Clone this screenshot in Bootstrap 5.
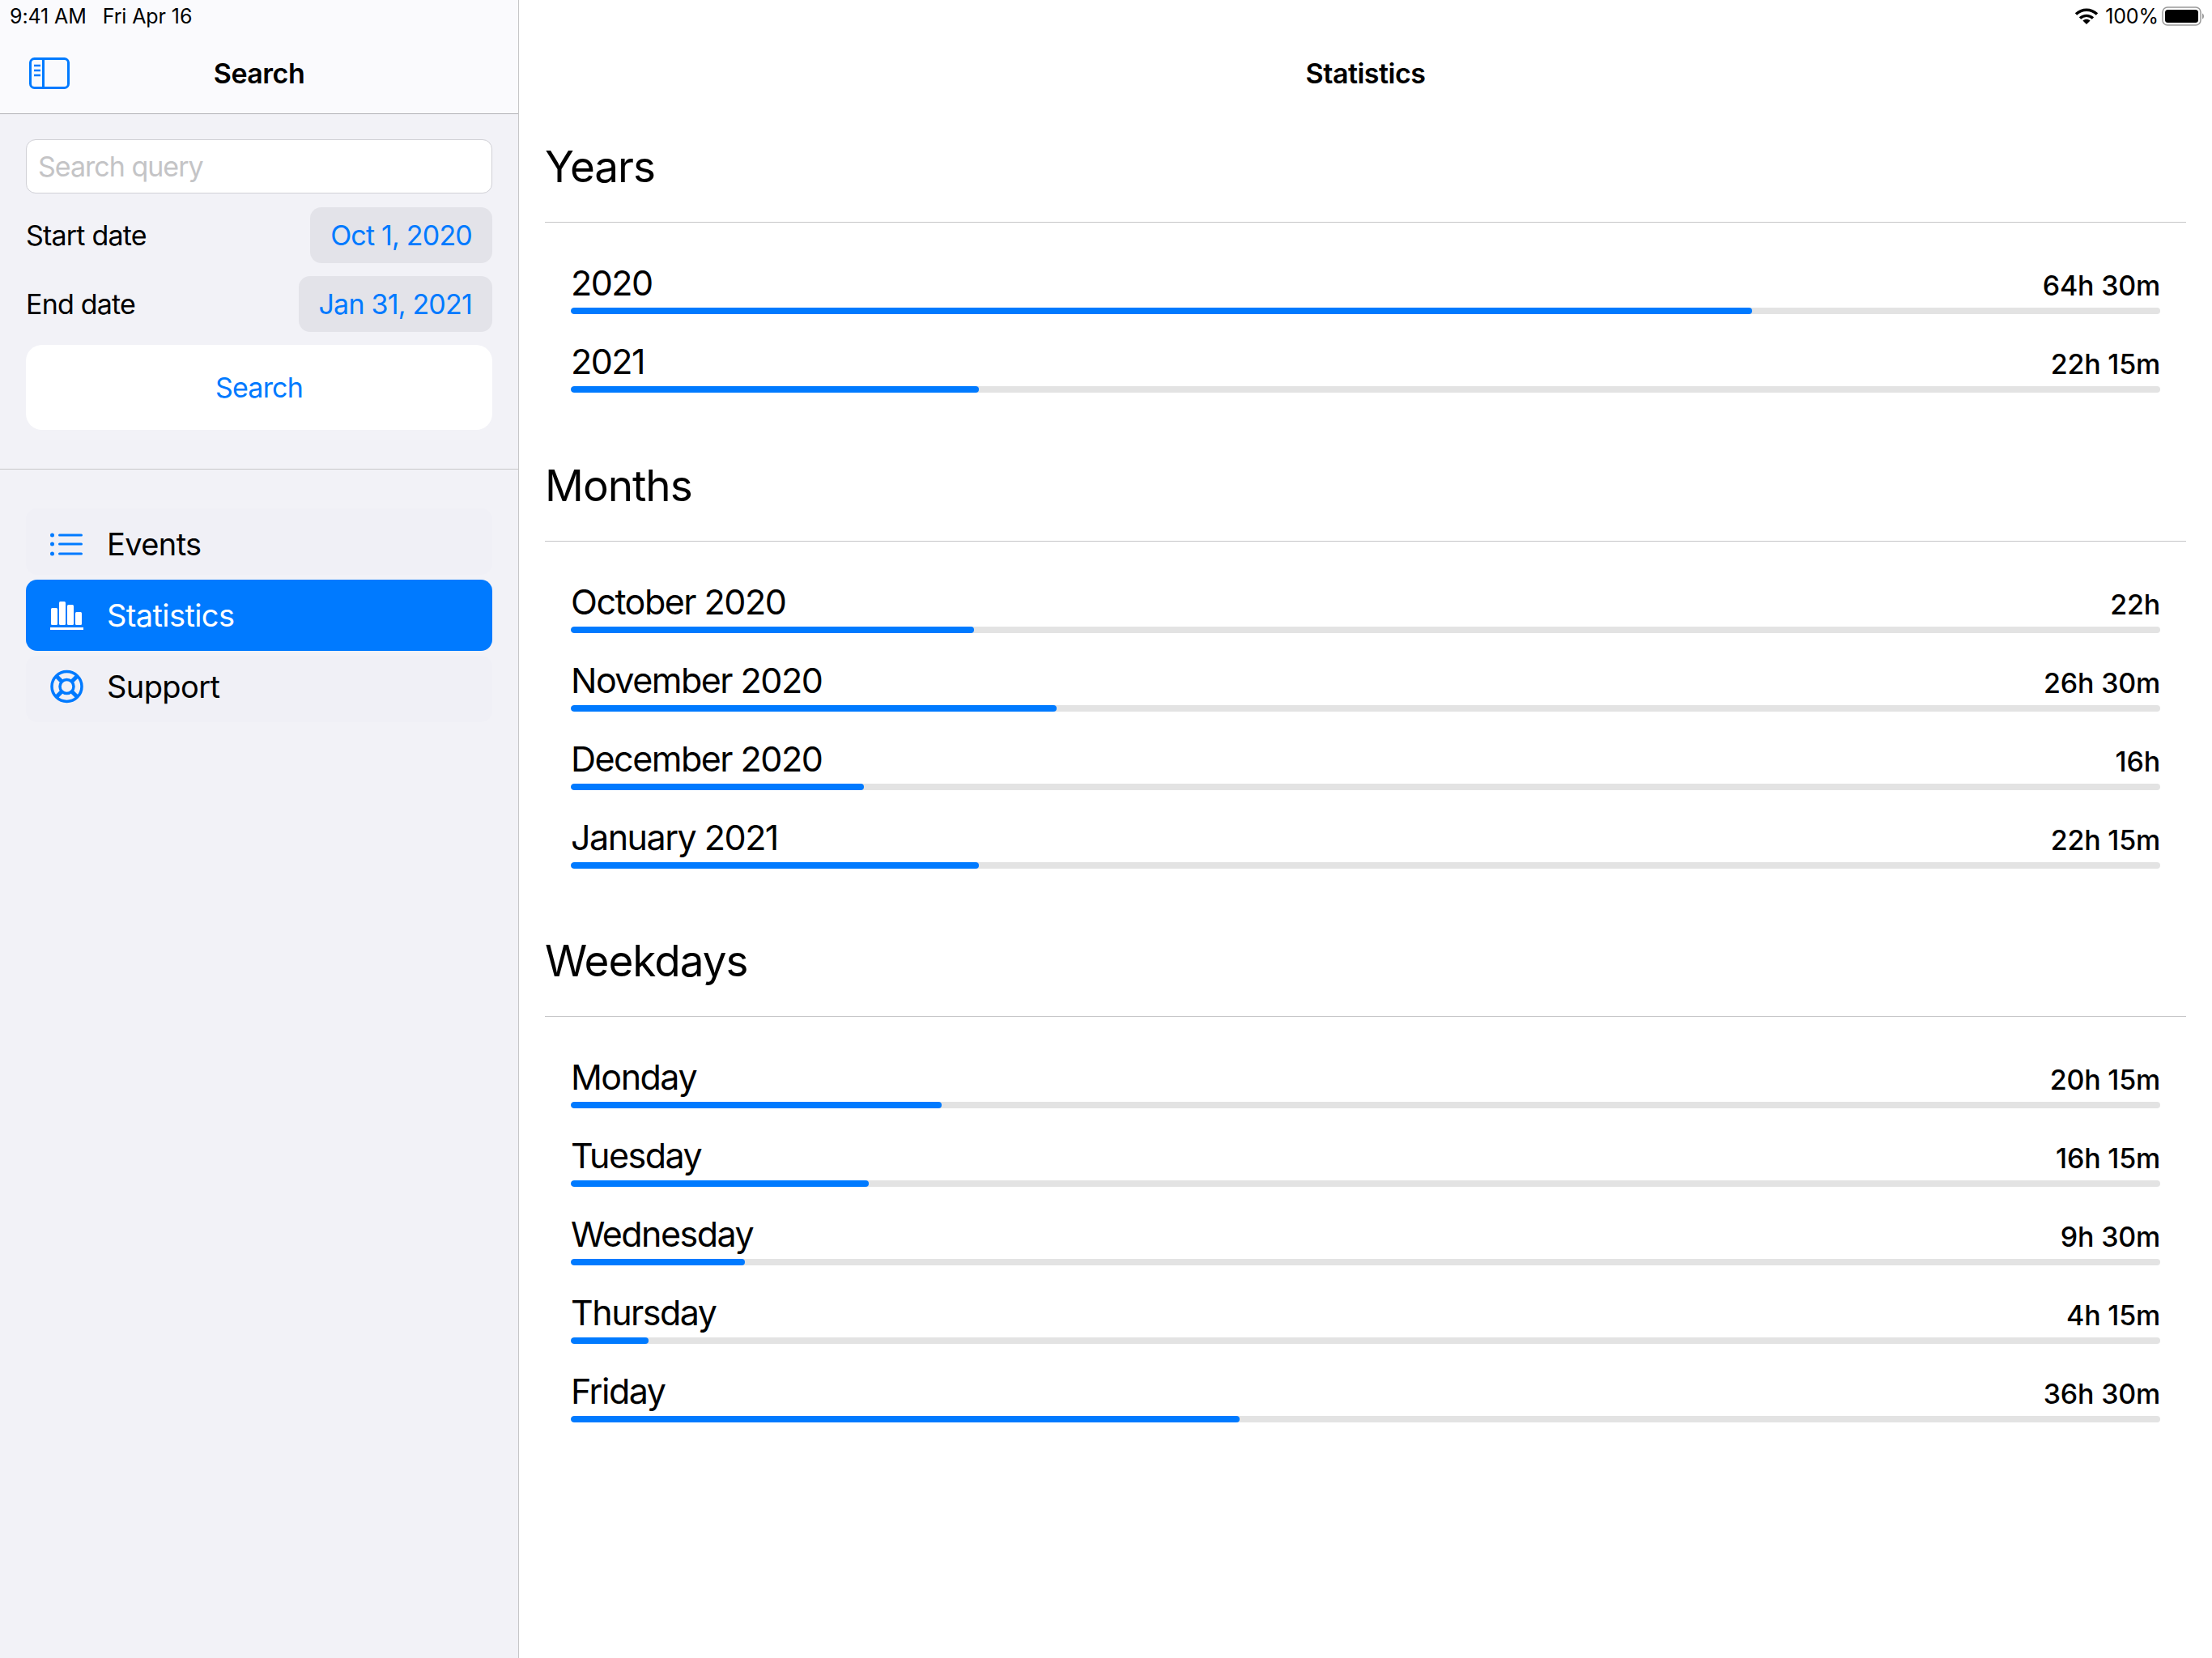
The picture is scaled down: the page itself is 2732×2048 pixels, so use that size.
<!DOCTYPE html>
<html lang="en">
<head>
  <meta charset="UTF-8" />
  <meta name="viewport" content="width=device-width, initial-scale=1.0"/>
  <link href="https://cdn.jsdelivr.net/npm/bootstrap@5.3.5/dist/css/bootstrap.min.css" rel="stylesheet" />
  <script src="https://cdn.jsdelivr.net/npm/bootstrap@5.3.5/dist/js/bootstrap.bundle.min.js" defer></script>
  <title>Statistics</title>
  <style>
    body {
      font-family: Inter, "Liberation Sans", sans-serif;
      color: #000;
      background: #fff;
      height: 2048px;
      overflow: hidden;
    }

    .side-pane {
      width: 641px;
      flex: none;
      height: 2048px;
      background: #f2f2f7;
      border-right: 1px solid #c6c6c8;
    }

    .side-head {
      height: 141px;
      background: #fafafd;
      border-bottom: 1px solid #b2b2b6;
    }

    .status-line {
      height: 40px;
      font-size: 25px;
      letter-spacing: -0.1px;
      line-height: 40px;
    }

    .side-head .status-line { padding-left: 12px; gap: 20px; }
    .main-pane .status-line { padding-right: 10px; }

    .battery-icon { margin-left: -4px; }

    .title-line {
      height: 100px;
      padding-top: 1px;
      font-size: 34px;
      font-weight: 600;
      letter-spacing: -0.5px;
    }

    .side-head .title-line { height: 100px; position: relative; }

    .toggle-icon {
      position: absolute;
      left: 35px;
      top: 30px;
    }

    .search-form {
      padding: 31px 32px 0;
      border-bottom: 1px solid #c6c6c8;
      height: 439px;
    }

    .search-form .form-control {
      height: 67px;
      font-size: 34px;
      letter-spacing: -1px;
      padding: 0 14px;
      border-color: #d1d1d6;
      border-radius: 12px;
      color: #000;
    }

    .search-form .form-control::placeholder { color: #c4c4c6; opacity: 1; }

    .date-line {
      font-size: 34px;
      letter-spacing: -0.8px;
      height: 69px;
      margin-top: 16px;
    }

    .search-form .form-control + .date-line { margin-top: 17px; }

    .date-pill {
      background: #e3e3e9;
      color: #007aff;
      border-radius: 14px;
      height: 69px;
      line-height: 69px;
      padding: 0 25px;
    }

    .search-form .btn {
      display: block;
      width: 100%;
      height: 105px;
      margin-top: 16px;
      background: #fff;
      color: #007aff;
      border: 0;
      border-radius: 20px;
      font-size: 34px;
      letter-spacing: -0.8px;
    }

    .side-nav { padding: 48px 32px 0; }

    .side-nav .list-group-item {
      height: 82px;
      display: flex;
      align-items: center;
      gap: 28px;
      padding: 0 29px;
      font-size: 38px;
      letter-spacing: -0.6px;
      color: #000;
      background: #f0f0f6;
      border: 0;
      border-radius: 14px;
    }

    .side-nav .list-group-item.first-row { padding-top: 6px; margin-bottom: 6px; }
    .side-nav .list-group-item.last-row { padding-bottom: 6px; margin-top: 6px; }

    .side-nav .list-group-item.active {
      height: 88px;
      margin-top: 0;
      background: #007aff;
      color: #fff;
    }

    .main-pane { min-width: 0; }
    .main-top { height: 170px; }

    .stat-group { padding: 0 32px 0 32px; margin-bottom: 79px; }
    .stat-group.tight-group { margin-bottom: 78px; }

    .stat-group h2 {
      font-size: 53px;
      font-weight: 400;
      letter-spacing: -1px;
      line-height: 72px;
      margin: 0;
      padding-bottom: 32px;
      border-bottom: 1px solid #c6c6c8;
    }

    .stat-rows { padding: 16px 32px 0; }

    .stat-row {
      height: 97px;
      display: flex;
      flex-direction: column;
      justify-content: flex-end;
    }

    .stat-name {
      font-size: 43px;
      letter-spacing: -1.5px;
      line-height: 56px;
      margin-bottom: 3px;
    }

    .stat-time {
      font-size: 34px;
      font-weight: 500;
      letter-spacing: -0.2px;
    }

    .stat-row .progress {
      height: 8px;
      background: #e3e3e3;
      border-radius: 4px;
    }

    .stat-row .progress-bar {
      background: #007aff;
      border-radius: 4px;
    }
  </style>
</head>
<body>

  <div class="d-flex">

    <!-- Colonne de recherche -->
    <div class="side-pane">
      <div class="side-head">
        <div class="status-line d-flex"><span>9:41 AM</span><span>Fri Apr 16</span></div>
        <div class="title-line d-flex align-items-center justify-content-center">
          <svg class="toggle-icon" width="52" height="42" viewBox="0 0 52 42" fill="none" stroke="#007aff" stroke-width="3">
            <rect x="2.5" y="2.5" width="47" height="36" rx="5"/>
            <path d="M18.5 2.5v36" />
            <path d="M7 11h8M7 17h8M7 23h8" stroke-width="2.5"/>
          </svg>
          Search
        </div>
      </div>

      <form class="search-form">
        <input type="text" class="form-control" placeholder="Search query">
        <div class="date-line d-flex justify-content-between align-items-center">
          <span>Start date</span>
          <span class="date-pill">Oct 1, 2020</span>
        </div>
        <div class="date-line d-flex justify-content-between align-items-center">
          <span>End date</span>
          <span class="date-pill">Jan 31, 2021</span>
        </div>
        <button type="button" class="btn">Search</button>
      </form>

      <div class="list-group side-nav">
        <div class="list-group-item first-row">
          <svg width="43" height="30" viewBox="0 0 43 30" fill="#007aff">
            <circle cx="3.5" cy="4" r="2.5"/><circle cx="3.5" cy="15" r="2.5"/><circle cx="3.5" cy="27" r="2.5"/>
            <rect x="11" y="2.5" width="30" height="3" rx="1.5"/><rect x="11" y="13.5" width="30" height="3" rx="1.5"/><rect x="11" y="25.5" width="30" height="3" rx="1.5"/>
          </svg>
          Events
        </div>
        <div class="list-group-item active">
          <svg width="43" height="36" viewBox="0 0 43 36" fill="#fff">
            <rect x="2" y="9" width="8" height="21" rx="1.5"/><rect x="12" y="1" width="8" height="29" rx="1.5"/>
            <rect x="22" y="5" width="8" height="25" rx="1.5"/><rect x="32" y="14" width="8" height="16" rx="1.5"/>
            <rect x="1" y="33" width="41" height="3"/>
          </svg>
          Statistics
        </div>
        <div class="list-group-item last-row">
          <svg width="43" height="42" viewBox="0 0 42 42" fill="none" stroke="#007aff" stroke-width="3.5">
            <circle cx="21" cy="21" r="18.5"/>
            <circle cx="21" cy="21" r="8.5"/>
            <path d="M8 8l7 7M34 8l-7 7M8 34l7-7M34 34l-7-7" stroke-width="5"/>
          </svg>
          Support
        </div>
      </div>
    </div>

    <!-- Colonne des statistiques -->
    <div class="main-pane flex-grow-1">
      <div class="main-top">
        <div class="status-line d-flex justify-content-end align-items-center gap-2">
          <svg width="30" height="22" viewBox="0 0 30 22" fill="none" stroke="#000" stroke-width="3.4">
            <path d="M2 8.5c7.5-7 18.5-7 26 0"/>
            <path d="M7 13.5c4.6-4.2 11.4-4.2 16 0"/>
            <path d="M15 21l-4.6-4.6c2.6-2.2 6.6-2.2 9.2 0z" fill="#000" stroke="none"/>
          </svg>
          <span>100%</span>
          <svg class="battery-icon" width="52" height="24" viewBox="0 0 52 24">
            <rect x="1" y="1" width="47" height="22" rx="6" fill="none" stroke="#9a9a9a" stroke-width="1.5"/>
            <rect x="4" y="4" width="41" height="16" rx="3.5" fill="#000"/>
            <path d="M50 8.5c1.4.5 2 2 2 3.5s-.6 3-2 3.5z" fill="#9a9a9a"/>
          </svg>
        </div>
        <div class="title-line d-flex align-items-center justify-content-center">Statistics</div>
      </div>

      <section class="stat-group">
        <h2>Years</h2>
        <div class="stat-rows">
          <div class="stat-row">
            <div class="d-flex justify-content-between align-items-baseline"><span class="stat-name">2020</span><span class="stat-time">64h 30m</span></div>
            <div class="progress"><div class="progress-bar" style="width: 74.35%"></div></div>
          </div>
          <div class="stat-row">
            <div class="d-flex justify-content-between align-items-baseline"><span class="stat-name">2021</span><span class="stat-time">22h 15m</span></div>
            <div class="progress"><div class="progress-bar" style="width: 25.65%"></div></div>
          </div>
        </div>
      </section>

      <section class="stat-group tight-group">
        <h2>Months</h2>
        <div class="stat-rows">
          <div class="stat-row">
            <div class="d-flex justify-content-between align-items-baseline"><span class="stat-name">October 2020</span><span class="stat-time">22h</span></div>
            <div class="progress"><div class="progress-bar" style="width: 25.36%"></div></div>
          </div>
          <div class="stat-row">
            <div class="d-flex justify-content-between align-items-baseline"><span class="stat-name">November 2020</span><span class="stat-time">26h 30m</span></div>
            <div class="progress"><div class="progress-bar" style="width: 30.55%"></div></div>
          </div>
          <div class="stat-row">
            <div class="d-flex justify-content-between align-items-baseline"><span class="stat-name">December 2020</span><span class="stat-time">16h</span></div>
            <div class="progress"><div class="progress-bar" style="width: 18.44%"></div></div>
          </div>
          <div class="stat-row">
            <div class="d-flex justify-content-between align-items-baseline"><span class="stat-name">January 2021</span><span class="stat-time">22h 15m</span></div>
            <div class="progress"><div class="progress-bar" style="width: 25.65%"></div></div>
          </div>
        </div>
      </section>

      <section class="stat-group">
        <h2>Weekdays</h2>
        <div class="stat-rows">
          <div class="stat-row">
            <div class="d-flex justify-content-between align-items-baseline"><span class="stat-name">Monday</span><span class="stat-time">20h 15m</span></div>
            <div class="progress"><div class="progress-bar" style="width: 23.34%"></div></div>
          </div>
          <div class="stat-row">
            <div class="d-flex justify-content-between align-items-baseline"><span class="stat-name">Tuesday</span><span class="stat-time">16h 15m</span></div>
            <div class="progress"><div class="progress-bar" style="width: 18.73%"></div></div>
          </div>
          <div class="stat-row">
            <div class="d-flex justify-content-between align-items-baseline"><span class="stat-name">Wednesday</span><span class="stat-time">9h 30m</span></div>
            <div class="progress"><div class="progress-bar" style="width: 10.95%"></div></div>
          </div>
          <div class="stat-row">
            <div class="d-flex justify-content-between align-items-baseline"><span class="stat-name">Thursday</span><span class="stat-time">4h 15m</span></div>
            <div class="progress"><div class="progress-bar" style="width: 4.9%"></div></div>
          </div>
          <div class="stat-row">
            <div class="d-flex justify-content-between align-items-baseline"><span class="stat-name">Friday</span><span class="stat-time">36h 30m</span></div>
            <div class="progress"><div class="progress-bar" style="width: 42.07%"></div></div>
          </div>
        </div>
      </section>
    </div>

  </div>

</body>
</html>
